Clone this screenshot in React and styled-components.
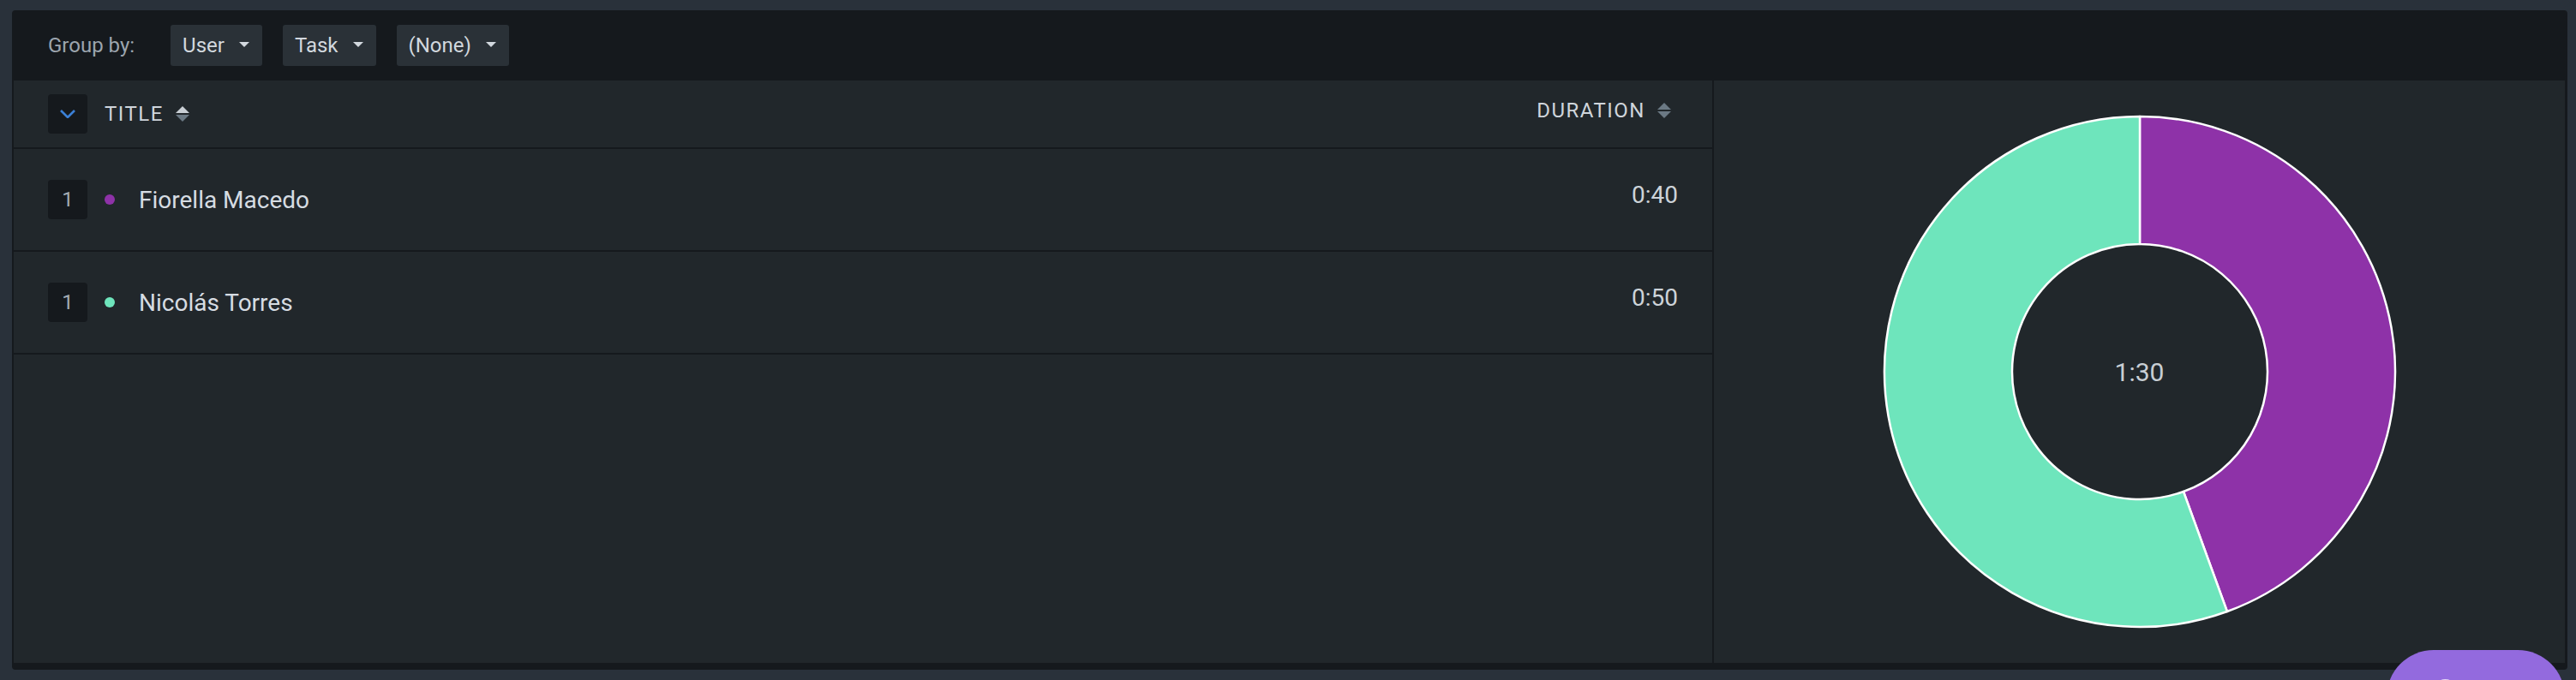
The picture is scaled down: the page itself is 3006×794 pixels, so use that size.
import React from "react";
import styled, { createGlobalStyle } from "styled-components";
import { MessageCircle } from "lucide-react";

const rows = [
  { id: 1, count: 1, name: "Fiorella Macedo", color: "#8e32a8", seconds: 40 },
  { id: 2, count: 1, name: "Nicolás Torres", color: "#6ee5bc", seconds: 50 },
];

const fmt = (s) => `${Math.floor(s / 60)}:${String(s % 60).padStart(2, "0")}`;

// 도넛 조각 path 계산
const arcPath = (cx, cy, R, r, a0, a1) => {
  const pt = (rad, a) => [cx + rad * Math.sin(a), cy - rad * Math.cos(a)];
  const large = a1 - a0 > Math.PI ? 1 : 0;
  const [x0, y0] = pt(R, a0);
  const [x1, y1] = pt(R, a1);
  const [x2, y2] = pt(r, a1);
  const [x3, y3] = pt(r, a0);
  return `M${x0},${y0} A${R},${R} 0 ${large} 1 ${x1},${y1} L${x2},${y2} A${r},${r} 0 ${large} 0 ${x3},${y3} Z`;
};

const Donut = ({ data }) => {
  const total = data.reduce((a, d) => a + d.seconds, 0);
  let start = 0;
  return (
    <svg width="600" height="600" viewBox="0 0 600 600">
      {data.map((d) => {
        const end = start + (d.seconds / total) * Math.PI * 2;
        const p = arcPath(300, 300, 298, 149, start, end);
        start = end;
        return (
          <path key={d.id} d={p} fill={d.color} stroke="#ffffff" strokeWidth="2.5" strokeLinejoin="round" />
        );
      })}
    </svg>
  );
};

const SortIcon = ({ active }) => (
  <SortSvg width="16" height="18" viewBox="0 0 16 18">
    <polygon points="0,8 8,0 16,8" fill={active ? "#c9cfd5" : "#6b7984"} />
    <polygon points="0,10 16,10 8,18" fill="#6b7984" />
  </SortSvg>
);

const App = () => {
  const total = rows.reduce((a, d) => a + d.seconds, 0);
  return (
    <>
      <GlobalStyle />
      <Panel>
        <Toolbar>
          <GroupLabel>Group by:</GroupLabel>
          <Dropdowns>
            {["User", "Task", "(None)"].map((t) => (
              <DropButton key={t}>
                {t}
                <Caret />
              </DropButton>
            ))}
          </Dropdowns>
        </Toolbar>
        <Body>
          <TablePane>
            <HeaderRow>
              <ToggleButton>
                <svg width="20" height="10" viewBox="0 0 20 10">
                  <polyline points="2,1 10,9 18,1" fill="none" stroke="#3b80d6" strokeWidth="2.6" />
                </svg>
              </ToggleButton>
              <HeaderCell>
                TITLE
                <SortIcon active />
              </HeaderCell>
              <HeaderCell $right>
                DURATION
                <SortIcon />
              </HeaderCell>
            </HeaderRow>
            {rows.map((r) => (
              <Row key={r.id}>
                <CountBadge>{r.count}</CountBadge>
                <Dot $color={r.color} />
                <Name>{r.name}</Name>
                <Duration>{fmt(r.seconds)}</Duration>
              </Row>
            ))}
          </TablePane>
          <ChartPane>
            <ChartWrap>
              <Donut data={rows} />
              <Total>{fmt(total)}</Total>
            </ChartWrap>
          </ChartPane>
        </Body>
      </Panel>
      <ChatBubble>
        <MessageCircle size={40} color="#ffffff" strokeWidth={2.5} />
      </ChatBubble>
    </>
  );
};

const GlobalStyle = createGlobalStyle`
  html, body {
    margin: 0;
    padding: 0;
    background: #29313a;
    font-family: Roboto, "Liberation Sans", sans-serif;
    overflow: hidden;
  }
  #root {
    height: 794px;
  }
`;

const Panel = styled.div`
  margin: 12px 10px 0 14px;
  height: 770px;
  box-sizing: border-box;
  background: #15191d;
  border-radius: 4px;
  padding: 0 3px 8px 2px;
  display: flex;
  flex-direction: column;
`;

const Toolbar = styled.div`
  height: 82px;
  flex-shrink: 0;
  display: flex;
  align-items: center;
  padding-left: 40px;
`;

const GroupLabel = styled.span`
  font-size: 24px;
  color: #9ca5ae;
  margin-right: 42px;
`;

const Dropdowns = styled.div`
  display: flex;
  gap: 24px;
`;

const DropButton = styled.div`
  height: 48px;
  box-sizing: border-box;
  padding: 0 15px 0 14px;
  display: flex;
  align-items: center;
  gap: 17px;
  background: #2a3137;
  border-radius: 3px;
  color: #d2d8de;
  font-size: 24px;
`;

// 드롭다운 화살표
const Caret = styled.span`
  width: 0;
  height: 0;
  border-left: 6px solid transparent;
  border-right: 6px solid transparent;
  border-top: 6px solid #d2d8de;
  margin-bottom: 2px;
`;

const Body = styled.div`
  flex: 1;
  display: flex;
  background: #21272b;
  min-height: 0;
`;

const TablePane = styled.div`
  width: 1982px;
  flex-shrink: 0;
  border-right: 2px solid #15191d;
  display: flex;
  flex-direction: column;
`;

const HeaderRow = styled.div`
  height: 78px;
  flex-shrink: 0;
  display: flex;
  align-items: center;
  padding: 0 48px 0 40px;
  border-bottom: 2px solid #15191d;
`;

const ToggleButton = styled.div`
  width: 46px;
  height: 46px;
  border-radius: 4px;
  background: #15191d;
  display: flex;
  align-items: center;
  justify-content: center;
  margin-right: 20px;
`;

const HeaderCell = styled.div`
  display: flex;
  align-items: center;
  font-size: 24px;
  letter-spacing: 1.5px;
  color: #cfd5db;
  margin-left: ${(p) => (p.$right ? "auto" : "0")};
  padding-bottom: ${(p) => (p.$right ? "8px" : "0")};
`;

const SortSvg = styled.svg`
  margin-left: 14px;
`;

const Row = styled.div`
  height: 118px;
  flex-shrink: 0;
  display: flex;
  align-items: center;
  padding: 0 40px;
  border-bottom: 2px solid #15191d;
`;

const CountBadge = styled.div`
  width: 46px;
  height: 46px;
  border-radius: 4px;
  background: #15191d;
  color: #a2abb4;
  font-size: 24px;
  display: flex;
  align-items: center;
  justify-content: center;
`;

const Dot = styled.span`
  width: 12px;
  height: 12px;
  border-radius: 50%;
  background: ${(p) => p.$color};
  margin: 0 28px 0 20px;
`;

const Name = styled.span`
  font-size: 28px;
  color: #d6dce2;
`;

const Duration = styled.span`
  margin-left: auto;
  font-size: 28px;
  color: #cdd3d9;
  padding-bottom: 12px;
`;

const ChartPane = styled.div`
  flex: 1;
  display: flex;
  align-items: center;
  justify-content: center;
`;

const ChartWrap = styled.div`
  position: relative;
  width: 600px;
  height: 600px;
  svg {
    display: block;
  }
`;

const Total = styled.div`
  position: absolute;
  inset: 0;
  display: flex;
  align-items: center;
  justify-content: center;
  font-size: 30px;
  color: #c8ced4;
`;

// 우측 하단 채팅 버튼
const ChatBubble = styled.div`
  position: fixed;
  left: 2785px;
  top: 759px;
  width: 208px;
  height: 110px;
  border-radius: 55px;
  background: #936ade;
  padding: 33px 0 0 48px;
  box-sizing: border-box;
`;

export default App;
